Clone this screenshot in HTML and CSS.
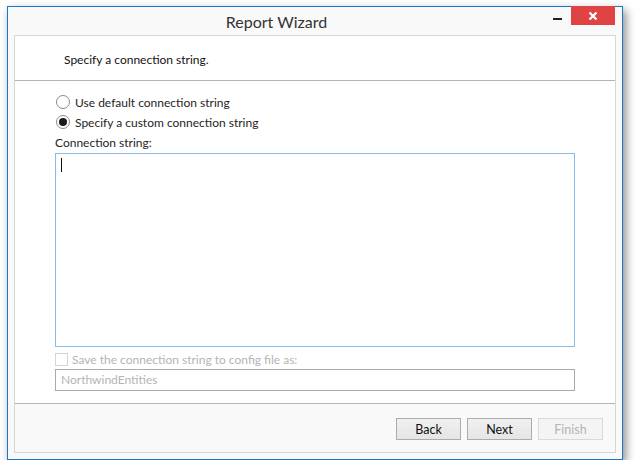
FILE: index.html
```html
<!DOCTYPE html>
<html>
<head>
<meta charset="utf-8">
<link rel="stylesheet" href="styles.css">
</head>
<body>
<div class="window">
  <div class="titlebar">
    <div class="title">Report Wizard</div>
    <div class="controls">
      <span class="min"></span>
      <span class="close"><svg width="10" height="10" viewBox="0 0 10 10"><path d="M1.5 1.5 L8.5 8.5 M8.5 1.5 L1.5 8.5" stroke="#fff" stroke-width="2.4" fill="none"/></svg></span>
    </div>
  </div>
  <div class="panel">
    <div class="header">Specify a connection string.</div>
    <div class="content">
      <div class="radio-row"><span class="radio"></span><span>Use default connection string</span></div>
      <div class="radio-row"><span class="radio checked"></span><span>Specify a custom connection string</span></div>
      <div class="field-label">Connection string:</div>
      <div class="textarea"><span class="caret"></span></div>
      <div class="check-row"><span class="checkbox"></span><span>Save the connection string to config file as:</span></div>
      <div class="textbox">NorthwindEntities</div>
    </div>
    <div class="footer">
      <button class="btn">Back</button>
      <button class="btn">Next</button>
      <button class="btn disabled">Finish</button>
    </div>
  </div>
</div>
</body>
</html>
```
FILE: styles.css
```css
* { box-sizing: border-box; }
html, body { margin: 0; padding: 0; background: #fff; }
body {
  font-family: "Lato", "Noto Sans", sans-serif;
  font-size: 12px;
  color: #1e1e1e;
  padding: 6px 0 0 7px;
}
.window {
  width: 616px;
  height: 454px;
  border: 1px solid #1b76c9;
  background: #f9f9f9;
  box-shadow: 3px 4px 9px rgba(0,0,0,0.45);
  display: flex;
  flex-direction: column;
  padding: 0 6px 6px 6px;
}
.titlebar {
  height: 28px;
  display: flex;
  margin: 0 -6px 0 -6px;
}
.title {
  flex: 1;
  text-align: center;
  font-size: 16px;
  color: #333;
  line-height: 28px;
  padding-top: 1px;
}
.controls {
  width: 77px;
  display: flex;
  align-items: flex-start;
}
.min {
  width: 9px;
  height: 2px;
  background: #222;
  margin: 11px 0 0 8px;
}
.close {
  width: 44px;
  height: 19px;
  margin: -1px 0 0 9px;
  background: #e04343;
  display: flex;
  align-items: center;
  justify-content: center;
}
.close svg { display: block; }
.panel {
  flex: 1;
  border: 1px solid #d6d6d6;
  background: #fff;
  display: flex;
  flex-direction: column;
}
.header {
  height: 45px;
  border-bottom: 1px solid #b4b4b4;
  display: flex;
  align-items: center;
  padding-left: 49px;
  padding-top: 2px;
  color: #111;
}
.content {
  flex: 1;
  padding: 11px 40px 0 40px;
  display: flex;
  flex-direction: column;
}
.radio-row {
  height: 20px;
  display: flex;
  align-items: center;
  padding-left: 1px;
}
.radio {
  width: 14px;
  height: 14px;
  border: 1px solid #8a8a8a;
  border-radius: 50%;
  background: #fff;
  margin-right: 5px;
  display: flex;
  align-items: center;
  justify-content: center;
}
.radio.checked::after {
  content: "";
  width: 8px;
  height: 8px;
  border-radius: 50%;
  background: #1a1a1a;
}
.field-label {
  height: 21px;
  line-height: 21px;
}
.textarea {
  height: 194px;
  border: 1px solid #86bde9;
  padding: 4px 0 0 5px;
}
.caret {
  display: block;
  width: 1px;
  height: 14px;
  background: #111;
}
.check-row {
  height: 20px;
  margin-top: 2px;
  display: flex;
  align-items: center;
  color: #b4b4b4;
}
.checkbox {
  width: 13px;
  height: 13px;
  border: 1px solid #d4d4d4;
  margin-right: 4px;
}
.textbox {
  height: 22px;
  border: 1px solid #ababab;
  color: #b4b4b4;
  padding-left: 5px;
  line-height: 20px;
}
.footer {
  height: 49px;
  border-top: 1px solid #b4b4b4;
  background: #f9f9f9;
  display: flex;
  justify-content: flex-end;
  align-items: flex-start;
  padding: 14px 12px 0 0;
  gap: 6px;
}
.btn {
  width: 65px;
  height: 22px;
  border: 1px solid #acacac;
  background: linear-gradient(#f0f0f0, #e5e5e5);
  font-family: inherit;
  font-size: 12.5px;
  color: #111;
  padding: 0;
}
.btn.disabled {
  border-color: #d9d9d9;
  background: #f4f4f4;
  color: #b4b4b4;
}
```
